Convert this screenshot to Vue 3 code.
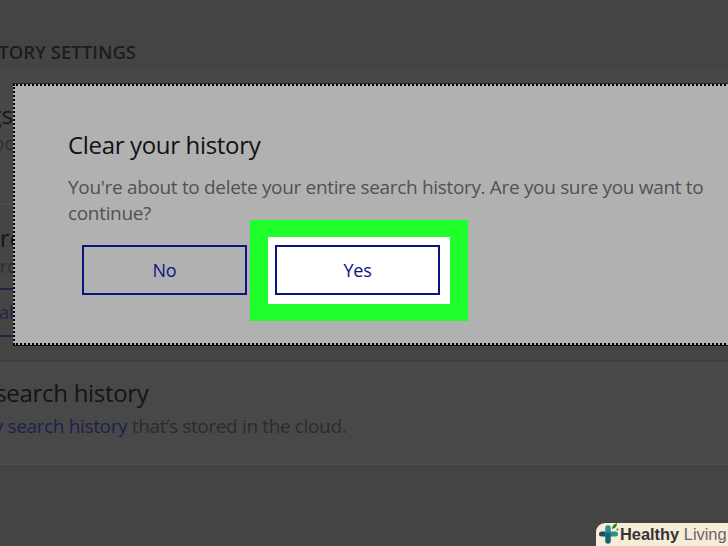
<script setup>
</script>

<template>
  <div class="page">
    <header class="top"><h1>HISTORY SETTINGS</h1></header>
    <section class="row first">
      <div class="stub t1"><span>Search settings</span></div>
      <div class="stub t2"><span>Across devices doc</span></div>
    </section>
    <section class="row second">
      <div class="stub t3"><span>Store</span></div>
      <div class="stub t4"><span>Improve pro</span></div>
      <div class="linkbox"><span>Clear all</span></div>
    </section>
    <section class="row third">
      <h2>Clear search history</h2>
      <p>Clear <a>my search history</a> that’s stored in the cloud.</p>
    </section>
    <div class="dialog">
      <h3>Clear your history</h3>
      <p>You're about to delete your entire search history. Are you sure you want to continue?</p>
      <div class="actions">
        <button class="btn">No</button>
        <div class="mark"><div class="halo"><button class="btn yes">Yes</button></div></div>
      </div>
    </div>
    <div class="badge">
      <svg class="logo" viewBox="0 0 24 26" width="24" height="26" aria-hidden="true">
        <path d="M4.5 15H11" stroke="#15505c" stroke-width="5" stroke-linecap="round" fill="none"/>
        <path d="M11 15h7.5" stroke="#2a8f98" stroke-width="5" stroke-linecap="round" fill="none"/>
        <path d="M11 9v6" stroke="#2a8f98" stroke-width="5.5" stroke-linecap="round" fill="none"/>
        <path d="M11 16v6" stroke="#1a6470" stroke-width="5.5" stroke-linecap="round" fill="none"/>
        <path d="M15 10c0-3 2-5 5-6 0 3-1 5-5 6z" fill="#2f7d32"/>
        <circle cx="20.5" cy="10.5" r="1" fill="#2f7d32"/>
      </svg>
      <span class="brand"><b>Healthy</b> Living</span>
    </div>
  </div>
</template>

<style scoped>
.page {
  position: relative;
  width: 728px;
  height: 546px;
  overflow: hidden;
  background: #444444;
  font-family: "Open Sans", "Noto Sans", sans-serif;
}
.top {
  height: 68px;
  box-sizing: border-box;
  padding-top: 41px;
  width: 136px;
  display: flex;
  justify-content: flex-end;
}
.top h1 {
  margin: 0;
  font-size: 18.5px;
  line-height: 22px;
  font-weight: 600;
  white-space: nowrap;
  color: #1c1c1c;
}
.row { box-sizing: border-box; }
.first { height: 137px; background: #474747; border-bottom: 1px solid #505050; padding-top: 32px; }
.second { height: 157px; background: #454545; border-bottom: 2px solid #3f3f3f; padding-top: 18px; }
.third { height: 103px; background: #484848; border-bottom: 1px solid #4e4e4e; padding-top: 16px; width: 100%; }
.stub { width: 13px; display: flex; justify-content: flex-end; white-space: nowrap; overflow: hidden; }
.t1, .t3 { font-size: 24px; line-height: 30px; color: #161616; }
.t2, .t4 { font-size: 18px; line-height: 24px; color: #2e2e2e; margin-top: 1px; }
.t3 { width: 23px; }
.t4 { width: 18px; }
.linkbox {
  margin-top: 10px;
  height: 49px;
  width: 18px;
  box-sizing: border-box;
  border-top: 2px solid #20244d;
  border-bottom: 2px solid #20244d;
  overflow: hidden;
  font-size: 18px;
  line-height: 45px;
  color: #20244d;
  display: flex;
  justify-content: flex-end;
  white-space: nowrap;
}
.third h2 {
  margin: 0 0 0 -67px;
  font-size: 24px;
  line-height: 30px;
  font-weight: 400;
  color: #141414;
  white-space: nowrap;
  letter-spacing: -0.3px;
}
.third p {
  margin: 6px 0 0 -72px;
  font-size: 19px;
  line-height: 25px;
  color: #2c2c2c;
  white-space: nowrap;
  letter-spacing: -0.36px;
}
.third a { color: #1c2150; }
.dialog {
  position: absolute;
  left: 13px;
  top: 84px;
  width: 720px;
  height: 261px;
  box-sizing: border-box;
  background: #b1b1b1;
  border: 2px dotted #000;
  border-right: none;
  box-shadow: 0 1px 0 #111, 0 -1px 0 #222;
  padding: 43px 0 0 53px;
}
.dialog h3 {
  margin: 0;
  font-size: 24px;
  line-height: 32px;
  font-weight: 400;
  color: #111;
  letter-spacing: -0.33px;
}
.dialog p {
  margin: 13px 0 0;
  width: 640px;
  font-size: 19px;
  line-height: 26px;
  color: #525252;
  letter-spacing: -0.33px;
}
.actions { display: flex; margin: 19px 0 0 14px; align-items: flex-start; }
.btn {
  width: 165px;
  height: 50px;
  box-sizing: border-box;
  background: transparent;
  border: 2px solid #0a1580;
  border-radius: 0;
  color: #0a1580;
  font: 400 18px/1 "Open Sans", "Noto Sans", sans-serif;
  letter-spacing: -0.3px;
  padding: 0;
}
.mark {
  margin: -25px 0 0 3px;
  background: #1fff2c;
  padding: 17px 18px;
  height: 101px;
  box-sizing: border-box;
}
.halo { background: #fff; padding: 8px 10px 8px 7px; height: 67px; box-sizing: border-box; }
.yes { background: #fff; }
.badge {
  position: absolute;
  right: 0;
  bottom: 0;
  width: 132px;
  height: 23px;
  background: #f6ecd8;
  border-radius: 9px 0 0 0;
  display: flex;
  align-items: center;
}
.logo { position: absolute; left: 1px; top: -4px; }
.brand {
  margin-left: 24px;
  font-family: "Liberation Sans", Arial, sans-serif;
  font-size: 16.4px;
  line-height: 23px;
  color: #666;
  white-space: nowrap;
}
.brand b { color: #333; }
</style>
